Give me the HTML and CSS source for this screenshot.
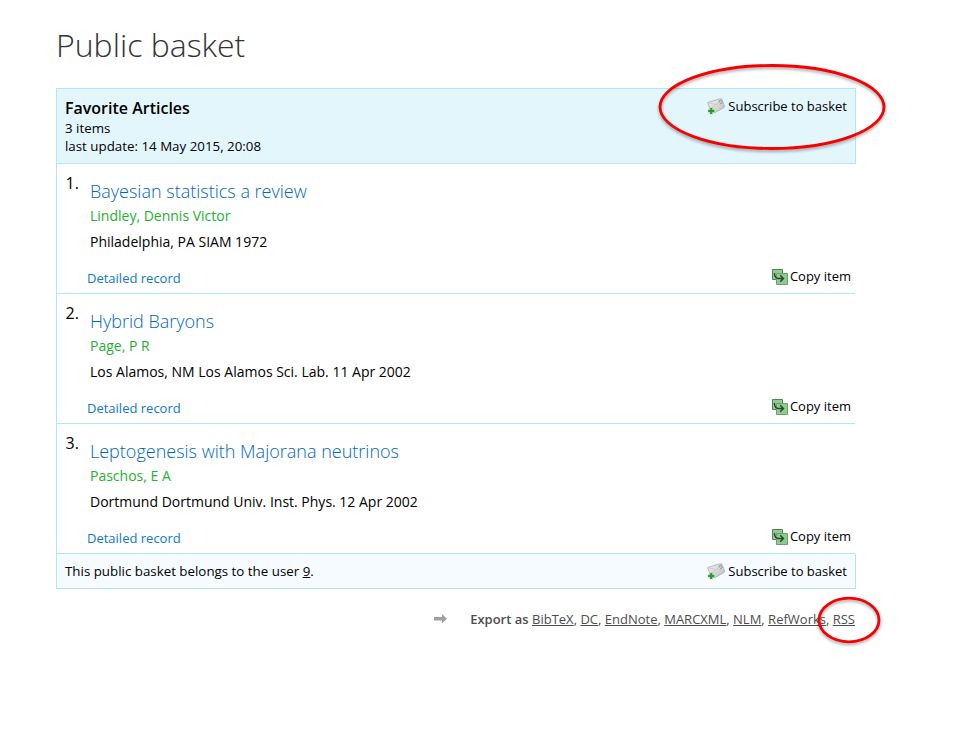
FILE: index.html
```
<!DOCTYPE html>
<html lang="en">
<head>
<meta charset="utf-8">
<title>Public basket</title>
<link rel="stylesheet" href="styles.css">
</head>
<body>
<svg class="symbols" width="0" height="0" aria-hidden="true">
  <linearGradient id="card" x1="0" y1="0" x2="1" y2="1"><stop offset="0" stop-color="#f4f4f4"/><stop offset="1" stop-color="#bdbdbf"/></linearGradient>
  <symbol id="mail-add" viewBox="0 0 18 18">
    <path d="M.6 5.6 11.8 2 14.6 1.8 17.6 9.2 16.8 10.8 7 16 3.2 12.5Z" fill="url(#card)" stroke="#acacae" stroke-width=".8" stroke-linejoin="round"/>
    <path d="M1.5 5.8 10 7.8 12.5 2.2M3.5 12 8 8.4M17 9.5 12 7.5" fill="none" stroke="#c4c4c6" stroke-width=".8"/>
    <path d="M12.4 3.8 14.2 3.2 15.3 6 13.5 6.7Z" fill="#e8e8ea" stroke="#88888c" stroke-width=".8"/>
    <path d="M4.2 10.6v6.6M.9 13.9h6.6" stroke="#a9d9a4" stroke-width="3.2"/>
    <path d="M4.2 10.9v6M1.2 13.9h6" stroke="#2a972e" stroke-width="2"/>
  </symbol>
  <symbol id="copy" viewBox="0 0 16 16">
    <path d="M.5.5h10v10H.5z" fill="#8fcb91" stroke="#587f5a"/>
    <path d="M4.5 4.5h11v11h-11z" fill="#8fcb91" stroke="#6f9c71"/>
    <path d="M2.5 4v1.5Q3 9 6 9.5h5M8.2 6.3l3.3 3.2-3.3 3.3" fill="none" stroke="#24482a" stroke-width="1.4"/>
  </symbol>
</svg>
<main class="page">
  <h1 class="page-title">Public basket</h1>
  <section class="basket">
    <header class="basket-head">
      <div>
        <h2 class="basket-name">Favorite Articles</h2>
        <p class="meta">3 items</p>
        <p class="meta">last update: 14 May 2015, 20:08</p>
      </div>
      <a class="subscribe"><svg class="mail"><use href="#mail-add"/></svg><span>Subscribe to basket</span>
        <svg class="mark mark-large" viewBox="0 0 230 92"><ellipse cx="115" cy="44" rx="112" ry="41.5"/></svg>
      </a>
    </header>
    <article class="item">
      <span class="number">1.</span>
      <div class="record"><h3 class="title">Bayesian statistics a review</h3><p class="author">Lindley, Dennis Victor</p><p class="imprint">Philadelphia, PA SIAM 1972</p></div>
      <div class="actions"><a class="detail">Detailed record</a><a class="copy"><svg class="copy-icon"><use href="#copy"/></svg><span>Copy item</span></a></div>
    </article>
    <article class="item">
      <span class="number">2.</span>
      <div class="record"><h3 class="title">Hybrid Baryons</h3><p class="author">Page, P R</p><p class="imprint">Los Alamos, NM Los Alamos Sci. Lab. 11 Apr 2002</p></div>
      <div class="actions"><a class="detail">Detailed record</a><a class="copy"><svg class="copy-icon"><use href="#copy"/></svg><span>Copy item</span></a></div>
    </article>
    <article class="item">
      <span class="number">3.</span>
      <div class="record"><h3 class="title">Leptogenesis with Majorana neutrinos</h3><p class="author">Paschos, E A</p><p class="imprint">Dortmund Dortmund Univ. Inst. Phys. 12 Apr 2002</p></div>
      <div class="actions"><a class="detail">Detailed record</a><a class="copy"><svg class="copy-icon"><use href="#copy"/></svg><span>Copy item</span></a></div>
    </article>
    <footer class="basket-foot">
      <p class="owner">This public basket belongs to the user <u>9</u>.</p>
      <a class="subscribe"><svg class="mail"><use href="#mail-add"/></svg><span>Subscribe to basket</span></a>
    </footer>
  </section>
  <div class="export">
    <svg class="arrow" viewBox="0 0 14 10"><path d="M0 3h8V0l5 4.7L8 9.4v-3H0z" fill="#a0a0a0"/></svg>
    <p class="formats"><b>Export as</b> <u>BibTeX</u>, <u>DC</u>, <u>EndNote</u>, <u>MARCXML</u>, <u>NLM</u>, <u>RefWorks</u>, <u>RSS</u></p>
    <svg class="mark mark-small" viewBox="0 0 66 52"><ellipse cx="33" cy="25" rx="30" ry="21.8"/></svg>
  </div>
</main>
</body>
</html>
```

FILE: styles.css
```
* { box-sizing: border-box; }
body { margin: 0; background: #fff; color: #000; font: 13.33px/18px "Open Sans", "Noto Sans", sans-serif; }
h1, h2, h3, p { margin: 0; }
a { color: inherit; }
.symbols { position: absolute; }
.page { width: 800px; min-height: 730px; margin-left: 56px; padding-top: 22px; }
.page-title { height: 66px; font-size: 32px; line-height: 46px; font-weight: 300; color: #333; white-space: nowrap; }
.basket { border-left: 1px solid #b3e5f5; }
.basket-head { display: flex; justify-content: space-between; height: 76px; padding: 9px 8px 0; background: #e3f6fc; border: 1px solid #b3e5f5; border-left: 0; }
.basket-name { font-size: 16px; line-height: 21px; font-weight: 600; }
.subscribe { position: relative; display: flex; align-items: center; gap: 3px; height: 18px; font-size: 13px; white-space: nowrap; }
.basket-head .subscribe { margin-top: -1px; }
.mail { width: 18px; height: 18px; }
.item { display: grid; grid-template-columns: 24.5px 1fr; grid-template-rows: 100px 29px; height: 130px; margin-right: 1px; padding-left: 8.5px; border-bottom: 1px solid #b3e5f5; }
.number { padding-top: 8px; font-size: 16px; line-height: 22px; }
.title { padding-top: 15px; font-size: 18px; line-height: 25px; font-weight: 300; color: #0068bb; }
.author { padding-top: 3px; font-size: 14px; line-height: 18px; color: #24b02f; }
.imprint { padding-top: 8px; font-size: 14px; }
.actions { grid-column: 1 / 3; display: flex; justify-content: space-between; padding: 3px 4px 0 21.5px; font-size: 13px; }
.detail { padding-top: 2px; color: #0d79c7; }
.copy { display: flex; gap: 2px; height: 18px; }
.copy-icon { width: 16px; height: 16px; margin-top: 2px; }
.basket-foot { display: flex; justify-content: space-between; height: 35px; padding: 8px 8px 0; background: #f5fbfe; border: 1px solid #b3e5f5; border-width: 0 1px 1px 0; }
.export { position: relative; display: flex; justify-content: flex-end; align-items: flex-start; padding: 21px 1px 0 0; font-size: 13px; color: #4d4d4d; white-space: nowrap; }
.export b { font-weight: 600; }
.arrow { width: 14px; height: 10px; margin: 4px 22px 0 0; }
.mark { position: absolute; overflow: visible; fill: none; stroke: #f90000; stroke-width: 2.8; filter: drop-shadow(0 2px 1.5px #0005); }
.mark-large { width: 230px; height: 92px; left: -50px; top: -34px; }
.mark-small { width: 66px; height: 52px; right: -26px; top: 6px; }
```
